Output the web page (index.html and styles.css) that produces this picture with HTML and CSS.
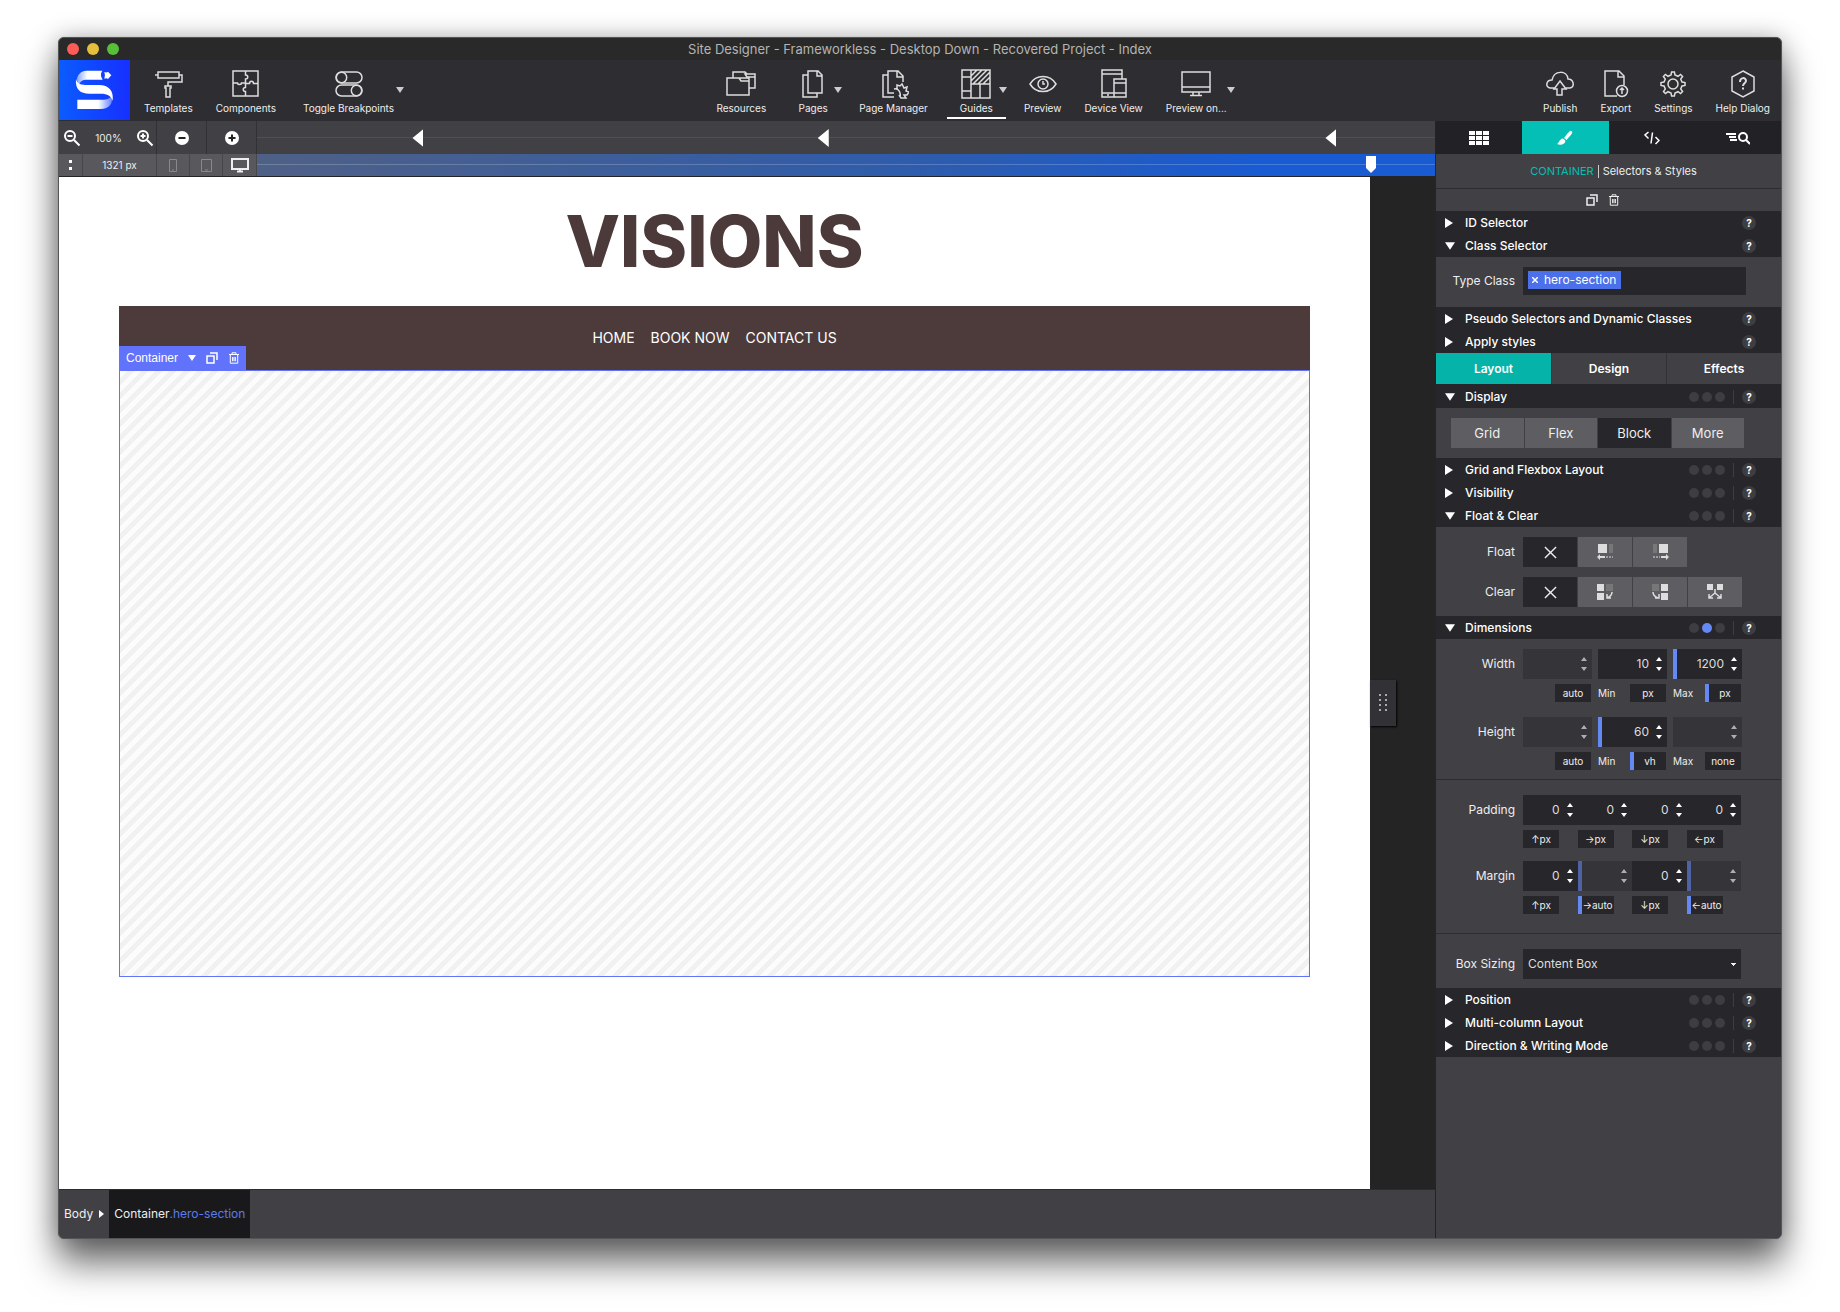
FILE: index.html
```html
<!DOCTYPE html>
<html lang="en">
<head>
<meta charset="utf-8">
<title>Site Designer</title>
<link rel="stylesheet" href="styles.css">
</head>
<body>
<svg class="sprite" aria-hidden="true">
  <symbol id="copy" viewBox="0 0 12 12"><path d="M1 4h7v7H1zM4 1h7v7" fill="none" stroke="currentColor" stroke-width="1.5"/></symbol>
  <symbol id="trash" viewBox="0 0 12 12"><path d="M1 2.5h10M4 2V.8h4V2M2.3 3v8.2h7.4V3M4.6 5v4.2M6 5v4.2M7.4 5v4.2" fill="none" stroke="currentColor"/></symbol>
  <symbol id="spin" viewBox="0 0 6 16"><path d="M0 5l3-4 3 4zM0 11l3 4 3-4z" fill="currentColor"/></symbol>
  <symbol id="cross" viewBox="0 0 14 14"><path d="M1 1l12 12M13 1L1 13" fill="none" stroke="currentColor" stroke-width="1.5"/></symbol>
  <symbol id="down" viewBox="0 0 8 6"><path d="M0 0h8L4 6z" fill="currentColor"/></symbol>
  <symbol id="right" viewBox="0 0 8 10"><path d="M0 0l8 5-8 5z" fill="currentColor"/></symbol>
</svg>

<div class="window">
  <header class="titlebar">
    <div class="lights"><i class="light red"></i><i class="light yellow"></i><i class="light green"></i></div>
    <h1>Site Designer - Frameworkless - Desktop Down - Recovered Project - Index</h1>
  </header>

  <nav class="toolbar">
    <div class="group">
      <div class="logo">
        <svg viewBox="0 0 213 180" width="71" height="60">
          <defs>
            <linearGradient id="g1" x1="0" x2="1"><stop offset="0" stop-color="#fff" stop-opacity=".5"/><stop offset=".4" stop-color="#fff"/></linearGradient>
            <linearGradient id="g2" x1="0" x2="1"><stop offset=".6" stop-color="#fff"/><stop offset="1" stop-color="#fff" stop-opacity=".35"/></linearGradient>
          </defs>
          <path fill="url(#g1)" d="M54 59C55 43 66 33 82 32h48q-9 13 1 27H84C72 59 62 62 60 78Q55 70 54 59z"/>
          <path fill="#fff" d="M51 56C54 72 66 75 88 75h32c30 0 45 18 41 48-4-15-16-22-36-22H92C62 101 48 86 51 56z"/>
          <path fill="url(#g2)" d="M55 119h80c14 0 20-6 22-13 8 24-6 41-32 41H55z"/>
          <path fill="#fff" d="M136 36q7 3 11-1l10 11-10 11q-4-4-11-1 4-10 0-20z"/>
        </svg>
      </div>
      <button class="tool"><svg class="icon" viewBox="0 0 30 30"><path d="M5 3h21v6H5zM5 6H2M26 6h3v7H15v4M12 17h6v2h-1v9h-4v-9h-1z"/></svg>Templates</button>
      <button class="tool"><svg class="icon" viewBox="0 0 30 30"><path d="M2 2h25v25H2zM14.500 2v4c3 0 3 4 0 4v4h-4c0 2-4 2-4 0H2M14.500 14.500h4c0-3 4-3 4 0H27M14.500 14.500v4c-3 0-3 4 0 4V27"/></svg>Components</button>
      <div class="menu wide"><button class="tool"><svg class="icon" viewBox="0 0 30 30"><rect x="2" y="3" width="26" height="11" rx="5.500"/><circle cx="7.500" cy="8.500" r="5.200"/><rect x="2" y="16" width="26" height="11" rx="5.500"/><circle cx="22.500" cy="21.500" r="5.200"/></svg>Toggle Breakpoints</button><button class="more" aria-label="More"><svg width="8" height="6"><use href="#down"/></svg></button></div>
    </div>

    <div class="group center">
      <button class="tool"><svg class="icon" viewBox="0 0 30 30"><path d="M1 9h12l2 3h8v14H1zM7 9V3h12l2 2h8v14h-6M13 9h10v3M19 5h10v3h-8z"/></svg>Resources</button>
      <div class="menu"><button class="tool"><svg class="icon" viewBox="0 0 30 30"><path d="M10 2h10l4 4v18H10zM19 2v5h5M10 6H5v22h14v-4"/></svg>Pages</button><button class="more" aria-label="More"><svg width="8" height="6"><use href="#down"/></svg></button></div>
      <button class="tool"><svg class="icon" viewBox="0 0 30 30"><path d="M15 24h-6V2h10l5 5v6M18 2v6h6M9 6H4v22h11M18 21v-5l3 1 2-2 2 4 3-1-1 4 3 1-2 3h-3l2 3h-5l-2-3M15 20c5-1 7 4 6 8"/></svg>Page Manager</button>
      <div class="menu active"><button class="tool"><svg class="icon" viewBox="0 0 30 30"><path d="M1 1h28v28H1zM10 1v28M1 8h9M1 22h9M10 15h19M19 15v14M10 7l6-6M10 12L21 1M12 15L26 1M17 15L29 3M22 15l7-7"/></svg>Guides</button><button class="more" aria-label="More"><svg width="8" height="6"><use href="#down"/></svg></button></div>
      <button class="tool"><svg class="icon" viewBox="0 0 30 30"><path d="M2 15C8 5 22 5 28 15 22 25 8 25 2 15z"/><circle cx="15" cy="15" r="5"/><path d="M15 12v3h2"/></svg>Preview</button>
      <button class="tool"><svg class="icon" viewBox="0 0 30 30"><path d="M15 24H3V1h20v9M3 5h20M15 28H3v-4M15 10h12v18H15zM15 14h12M15 24h12M8 26h2"/></svg>Device View</button>
      <div class="menu wide"><button class="tool"><svg class="icon" viewBox="0 0 30 30"><path d="M1 3h28v20H1zM1 18h28M12 23v3M18 23v3M9 26.500h12"/></svg>Preview on...</button><button class="more" aria-label="More"><svg width="8" height="6"><use href="#down"/></svg></button></div>
    </div>

    <div class="group end">
      <button class="tool"><svg class="icon" viewBox="0 0 30 30"><path d="M10 19H5c-5-1-4-8 2-8C9 1 22 1 23 10c6 0 7 8 2 9h-5M15 12l6 8h-4v6h-5v-6H9z"/></svg>Publish</button>
      <button class="tool"><svg class="icon" viewBox="0 0 30 30"><path d="M16 27H4V2h14l5 5v9M17 2v6h6"/><circle cx="21" cy="22" r="5.500"/><path d="M21 25v-6M19 21l2-2 2 2"/></svg>Export</button>
      <button class="tool"><svg class="icon" viewBox="0 0 30 30"><path d="M13 6l.6-3h2.800l.6 3 3 1.300L22.600 5.500l2 2L22.700 10 24 13l3 .6v2.800l-3 .6-1.300 3 1.900 2.500-2 2L20 22.700 17 24l-.6 3h-2.800L13 24l-3-1.300-2.500 1.900-2-2L7.300 20 6 17l-3-.6v-2.800L6 13l1.300-3-1.900-2.500 2-2L10 7.300z"/><circle cx="15" cy="15" r="5"/></svg>Settings</button>
      <button class="tool"><svg class="icon" viewBox="0 0 30 30"><path d="M15 2l11 6v14l-11 6-11-6V8z"/><path stroke-width="2" d="M12 13c0-5 6-5 6-1 0 2-3 2-3 5M15 18.500v2"/></svg>Help Dialog</button>
    </div>
  </nav>

  <div class="main">
    <section class="workspace">
      <div class="rulers">
        <div class="zoombar">
          <div class="zoom">
            <button aria-label="Zoom out"><svg width="18" height="18" viewBox="0 0 18 18" class="glass"><circle cx="7" cy="7" r="5"/><path d="M11 11l5.500 5.500M4.500 7h5"/></svg></button>
            <span>100%</span>
            <button aria-label="Zoom in"><svg width="18" height="18" viewBox="0 0 18 18" class="glass"><circle cx="7" cy="7" r="5"/><path d="M11 11l5.500 5.500M4.500 7h5M7 4.500v5"/></svg></button>
          </div>
          <button class="cell" aria-label="Remove breakpoint"><svg width="14" height="14" viewBox="0 0 14 14"><circle cx="7" cy="7" r="7" fill="#fff"/><path d="M3.500 7h7" stroke="#222" stroke-width="2"/></svg></button>
          <button class="cell" aria-label="Add breakpoint"><svg width="14" height="14" viewBox="0 0 14 14"><circle cx="7" cy="7" r="7" fill="#fff"/><path d="M3.500 7h7M7 3.500v7" stroke="#222" stroke-width="2"/></svg></button>
        </div>
        <div class="track">
          <i class="mark" style="left:13.200%"></i><i class="mark" style="left:47.600%"></i><i class="mark" style="left:90.700%"></i>
        </div>
        <div class="sizebar">
          <button class="dots" aria-label="Options"><svg width="4" height="10"><path d="M0 0h3v3H0zM0 7h3v3H0z" fill="#fff"/></svg></button>
          <span class="size">1321 px</span>
          <button class="device" aria-label="Phone"><svg width="8" height="13"><path d="M.5.500h7v12h-7zM3 11h2"/></svg></button>
          <button class="device" aria-label="Tablet"><svg width="11" height="13"><path d="M.5.500h10v12H.5zM4 11h3"/></svg></button>
          <button class="device on" aria-label="Desktop"><svg width="18" height="15"><path d="M1 1h16v10H1zM6 13.500h6M9 11v2"/></svg></button>
        </div>
        <div class="slider"><i class="thumb"></i></div>
      </div>

      <div class="stage">
        <div class="page">
          <h2>VISIONS</h2>
          <div class="sitenav"><a href="#">HOME</a><a href="#">BOOK NOW</a><a href="#">CONTACT US</a>
            <div class="tag">
              <span>Container</span><svg width="8" height="6"><use href="#down"/></svg>
              <button aria-label="Duplicate"><svg width="12" height="12"><use href="#copy"/></svg></button>
              <button aria-label="Delete"><svg width="12" height="12"><use href="#trash"/></svg></button>
            </div>
          </div>
          <div class="hero"></div>
        </div>
        <div class="gutter"><button class="grip" aria-label="Resize"><svg width="8" height="18"><path d="M0 1h2M6 1h2M0 6h2M6 6h2M0 11h2M6 11h2M0 16h2M6 16h2" stroke="#aaa" stroke-width="2"/></svg></button></div>
      </div>

      <footer class="crumbs">
        <a href="#" class="crumb">Body <svg width="5" height="8"><path d="M0 0l5 4-5 4z" fill="#fff"/></svg></a>
        <a href="#" class="crumb current">Container<span>.hero-section</span></a>
      </footer>
    </section>

    <aside class="panel">
      <div class="modes">
        <button aria-label="Components"><svg width="20" height="14"><path d="M0 2h6M7 2h6M14 2h6M0 7h6M7 7h6M14 7h6M0 12h6M7 12h6M14 12h6" stroke="#fff" stroke-width="4"/></svg></button>
        <button class="on" aria-label="Styles"><svg width="16" height="16"><path d="M14.500 1C16.500 2.500 15 4 9.500 10L7 8C11 3 13 0 14.500 1zM6 8.500l2.500 2.300C8 15 3 15.500 0 14 2.500 13 2 9 6 8.500z" fill="#fff"/></svg></button>
        <button aria-label="Code"><svg width="16" height="14"><path d="M4.500 1L1 4l3.500 3.500M8.500 1.500l-1.500 11M11.500 6L15 9.500 11.500 13" fill="none" stroke="#fff" stroke-width="1.500"/></svg></button>
        <button aria-label="Inspect"><svg width="24" height="14"><path d="M0 3h10M3 6h7M4 9h7" stroke="#fff" stroke-width="2"/><circle cx="17" cy="6" r="4" fill="none" stroke="#fff" stroke-width="2"/><path d="M20 9l4 4" stroke="#fff" stroke-width="2"/></svg></button>
      </div>
      <div class="heading"><b>CONTAINER</b><i></i>Selectors &amp; Styles</div>
      <div class="actions"><button aria-label="Duplicate"><svg width="12" height="12"><use href="#copy"/></svg></button><button aria-label="Delete"><svg width="12" height="12"><use href="#trash"/></svg></button></div>

      <div class="row"><button class="fold"><svg width="8" height="10"><use href="#right"/></svg>ID Selector</button><button class="help">?</button></div>
      <div class="row open"><button class="fold"><svg width="10" height="8"><use href="#down"/></svg>Class Selector</button><button class="help">?</button></div>
      <div class="body classes">
        <label for="cls">Type Class</label>
        <div class="tokens"><span class="token"><button aria-label="Remove"><svg width="6" height="6" viewBox="0 0 6 6"><path d="M0 0l6 6M6 0L0 6" stroke="#fff" stroke-width="1.500"/></svg></button>hero-section</span><input id="cls" type="text"></div>
      </div>
      <div class="row"><button class="fold"><svg width="8" height="10"><use href="#right"/></svg>Pseudo Selectors and Dynamic Classes</button><button class="help">?</button></div>
      <div class="row"><button class="fold"><svg width="8" height="10"><use href="#right"/></svg>Apply styles</button><button class="help">?</button></div>

      <div class="tabs"><button class="on">Layout</button><button>Design</button><button>Effects</button></div>

      <div class="row"><button class="fold"><svg width="10" height="8"><use href="#down"/></svg>Display</button><span class="states"><i></i><i></i><i></i></span><button class="help">?</button></div>
      <div class="body"><div class="choices"><button>Grid</button><button>Flex</button><button class="on">Block</button><button>More</button></div></div>

      <div class="row"><button class="fold"><svg width="8" height="10"><use href="#right"/></svg>Grid and Flexbox Layout</button><span class="states"><i></i><i></i><i></i></span><button class="help">?</button></div>
      <div class="row"><button class="fold"><svg width="8" height="10"><use href="#right"/></svg>Visibility</button><span class="states"><i></i><i></i><i></i></span><button class="help">?</button></div>
      <div class="row"><button class="fold"><svg width="10" height="8"><use href="#down"/></svg>Float &amp; Clear</button><span class="states"><i></i><i></i><i></i></span><button class="help">?</button></div>
      <div class="body stack">
        <div class="field"><span class="name">Float</span><div class="quad icons">
          <button class="on" aria-label="None"><svg width="13" height="13"><use href="#cross"/></svg></button>
          <button aria-label="Left"><svg width="17" height="16"><path fill="#ddd" d="M1 0h9v9H1zM0 13l3-3v2h5v2H3v2z"/><path fill="#777" d="M12 0h4v9h-4z"/><path d="M9 13h7" stroke="#ddd" stroke-dasharray="2 1"/></svg></button>
          <button aria-label="Right"><svg width="17" height="16"><path fill="#ddd" d="M7 0h9v9H7zM17 13l-3-3v2H9v2h5v2z"/><path fill="#777" d="M1 0h4v9H1z"/><path d="M1 13h7" stroke="#ddd" stroke-dasharray="2 1"/></svg></button>
        </div></div>
        <div class="field"><span class="name">Clear</span><div class="quad icons">
          <button class="on" aria-label="None"><svg width="13" height="13"><use href="#cross"/></svg></button>
          <button aria-label="Left"><svg width="17" height="17"><path fill="#ddd" d="M0 0h7v7H0zM0 9h7v7H0z"/><path fill="#777" d="M9 0h7v7H9z"/><path d="M15 8q0 4-5 6M10 10v4h4" fill="none" stroke="#ddd" stroke-width="1.500"/></svg></button>
          <button aria-label="Right"><svg width="17" height="17"><path fill="#ddd" d="M9 0h7v7H9zM9 9h7v7H9z"/><path fill="#777" d="M0 0h7v7H0z"/><path d="M1 8q0 4 5 6M7 10v4H3" fill="none" stroke="#ddd" stroke-width="1.500"/></svg></button>
          <button aria-label="Both"><svg width="17" height="17"><path fill="#ddd" d="M0 0h6v6H0zM10 0h6v6h-6z"/><path d="M8 5v4l-6 5M8 9l6 5M2 10v4h4M14 10v4h-4" fill="none" stroke="#ddd" stroke-width="1.500"/></svg></button>
        </div></div>
      </div>

      <div class="row"><button class="fold"><svg width="10" height="8"><use href="#down"/></svg>Dimensions</button><span class="states"><i></i><i class="set"></i><i></i></span><button class="help">?</button></div>
      <div class="body dims">
        <div class="field"><label class="name" for="w">Width</label><div class="triple">
          <div class="num off"><input id="w" type="text"><button aria-label="Step"><svg width="6" height="16"><use href="#spin"/></svg></button></div>
          <div class="num"><input aria-label="Min width" type="text" value="10"><button aria-label="Step"><svg width="6" height="16"><use href="#spin"/></svg></button></div>
          <div class="num set"><input aria-label="Max width" type="text" value="1200"><button aria-label="Step"><svg width="6" height="16"><use href="#spin"/></svg></button></div>
          <div class="unit"><button>auto</button></div>
          <div class="unit"><span>Min</span><button>px</button></div>
          <div class="unit"><span>Max</span><button class="set">px</button></div>
        </div></div>
        <div class="field"><label class="name" for="h">Height</label><div class="triple">
          <div class="num off"><input id="h" type="text"><button aria-label="Step"><svg width="6" height="16"><use href="#spin"/></svg></button></div>
          <div class="num set"><input aria-label="Min height" type="text" value="60"><button aria-label="Step"><svg width="6" height="16"><use href="#spin"/></svg></button></div>
          <div class="num off"><input aria-label="Max height" type="text"><button aria-label="Step"><svg width="6" height="16"><use href="#spin"/></svg></button></div>
          <div class="unit"><button>auto</button></div>
          <div class="unit"><span>Min</span><button class="set">vh</button></div>
          <div class="unit"><span>Max</span><button>none</button></div>
        </div></div>
      </div>
      <div class="body spacing">
        <div class="field"><label class="name" for="p">Padding</label><div class="quad">
          <div class="num"><input id="p" type="text" value="0"><button aria-label="Step"><svg width="6" height="16"><use href="#spin"/></svg></button></div>
          <div class="num"><input aria-label="Padding right" type="text" value="0"><button aria-label="Step"><svg width="6" height="16"><use href="#spin"/></svg></button></div>
          <div class="num"><input aria-label="Padding bottom" type="text" value="0"><button aria-label="Step"><svg width="6" height="16"><use href="#spin"/></svg></button></div>
          <div class="num"><input aria-label="Padding left" type="text" value="0"><button aria-label="Step"><svg width="6" height="16"><use href="#spin"/></svg></button></div>
          <div class="unit"><button>↑px</button></div><div class="unit"><button>→px</button></div><div class="unit"><button>↓px</button></div><div class="unit"><button>←px</button></div>
        </div></div>
        <div class="field"><label class="name" for="m">Margin</label><div class="quad">
          <div class="num"><input id="m" type="text" value="0"><button aria-label="Step"><svg width="6" height="16"><use href="#spin"/></svg></button></div>
          <div class="num off set"><input aria-label="Margin right" type="text"><button aria-label="Step"><svg width="6" height="16"><use href="#spin"/></svg></button></div>
          <div class="num"><input aria-label="Margin bottom" type="text" value="0"><button aria-label="Step"><svg width="6" height="16"><use href="#spin"/></svg></button></div>
          <div class="num off set"><input aria-label="Margin left" type="text"><button aria-label="Step"><svg width="6" height="16"><use href="#spin"/></svg></button></div>
          <div class="unit"><button>↑px</button></div><div class="unit"><button class="set">→auto</button></div><div class="unit"><button>↓px</button></div><div class="unit"><button class="set">←auto</button></div>
        </div></div>
      </div>
      <div class="body sizing">
        <div class="field"><label class="name" for="bs">Box Sizing</label><select id="bs"><option>Content Box</option><option>Border Box</option></select></div>
      </div>

      <div class="row"><button class="fold"><svg width="8" height="10"><use href="#right"/></svg>Position</button><span class="states"><i></i><i></i><i></i></span><button class="help">?</button></div>
      <div class="row"><button class="fold"><svg width="8" height="10"><use href="#right"/></svg>Multi-column Layout</button><span class="states"><i></i><i></i><i></i></span><button class="help">?</button></div>
      <div class="row"><button class="fold"><svg width="8" height="10"><use href="#right"/></svg>Direction &amp; Writing Mode</button><span class="states"><i></i><i></i><i></i></span><button class="help">?</button></div>
    </aside>
  </div>
</div>
</body>
</html>
```
FILE: styles.css
```css
* { box-sizing: border-box; }
body {
  margin: 0;
  padding: 37px 58px 73px;
  min-height: 100vh;
  display: flex;
  overflow: hidden;
  background: #fff;
  font: 12px/16px Inter, "Liberation Sans", sans-serif;
  color: #eee;
}
.sprite { position: absolute; width: 0; height: 0; }
svg { display: block; flex: none; }
button { border: 0; padding: 0; background: none; color: inherit; font: inherit; display: flex; align-items: center; justify-content: center; }
a { color: inherit; text-decoration: none; }
input { border: 0; padding: 0; background: none; color: inherit; font: inherit; min-width: 0; outline: 0; }

.window {
  flex: 1;
  display: flex;
  flex-direction: column;
  border: 1px solid #555558;
  border-radius: 6px;
  overflow: hidden;
  background: #414044;
  box-shadow: 0 0 1px #888, 0 24px 36px rgba(0, 0, 0, .58), 0 0 24px rgba(0, 0, 0, .25);
}
.titlebar { height: 22px; display: grid; grid-template-columns: 1fr auto 1fr; align-items: center; background: #292929; }
.lights { display: flex; gap: 8px; padding-left: 8px; }
.light { width: 12px; height: 12px; border-radius: 50%; }
.red { background: #fc5b57; }
.yellow { background: #e5bf3c; }
.green { background: #57c038; }
.titlebar h1 { margin: 0; font-size: 13px; font-weight: 400; color: #b4b4b4; }

.toolbar { height: 61px; display: flex; justify-content: space-between; background: #2e2d31; }
.group { display: flex; gap: 23px; }
.group.end { padding-right: 11px; }
.group.center { padding-left: 4px; }
.logo { width: 71px; height: 60px; margin-right: -9px; background: linear-gradient(90deg, #0a5cff, #1730ff); }
.tool { flex-direction: column; justify-content: flex-start; gap: 1px; padding-top: 9px; font-size: 10px; line-height: 16px; white-space: nowrap; }
.icon { width: 30px; height: 30px; fill: none; stroke: #ddd; stroke-width: 1.5; }
.menu { position: relative; display: flex; gap: 6px; margin: 0 -6px 0 9px; }
.menu.wide { gap: 2px; margin: 0 0 0 4px; }
.center .wide { gap: 0; margin: 0; }
.more { width: 8px; padding-bottom: 2px; color: #ccc; }
.menu.active::after { content: ""; position: absolute; left: -13px; right: 1px; bottom: 2px; height: 2px; background: #fff; }

.main { flex: 1; display: grid; grid-template-columns: 1fr 345px; }
.workspace { display: flex; flex-direction: column; min-width: 0; border-right: 1px solid #242327; }
.rulers { display: grid; grid-template-columns: 198px 1fr; grid-template-rows: 33px 22px; border-bottom: 1px solid #242327; }
.zoombar { display: grid; grid-template-columns: 98px 50px 50px; font-size: 10px; }
.zoombar > * { border-right: 1px solid #323135; }
.zoom { display: flex; align-items: center; justify-content: space-between; padding: 0 2px 0 4px; }
.glass { fill: none; stroke: #fff; stroke-width: 2; }
.track { position: relative; background: linear-gradient(#504f53, #504f53) 0 16px / 100% 1px no-repeat; }
.mark { position: absolute; top: 8px; width: 11px; height: 18px; background: #fff; clip-path: polygon(0 50%, 100% 0, 100% 100%); }
.sizebar { display: grid; grid-template-columns: 24px 74px 33px 33px 34px; background: #59585c; font-size: 10px; }
.sizebar > * { border-right: 1px solid #47464a; }
.size { text-align: center; line-height: 22px; }
.device svg { fill: none; stroke: #88878b; }
.device.on svg { stroke: #eee; stroke-width: 2; }
.slider { position: relative; background: linear-gradient(rgba(255, 255, 255, .2), rgba(255, 255, 255, .2)) 0 10px / 100% 1px no-repeat, linear-gradient(90deg, #4e6086, #2f5cab 55%, #195bd2 85%); }
.thumb { position: absolute; right: 59px; top: 2px; width: 10px; height: 17px; background: #fff; clip-path: polygon(0 0, 100% 0, 100% 70%, 50% 100%, 0 70%); }

.stage { flex: 1; display: grid; grid-template-columns: 1fr 65px; background: #242424; }
.page { background: #fff; padding: 22px 60px 0; }
.page h2 { margin: 0 0 23px; text-align: center; font-size: 71px; line-height: 84px; font-weight: 800; color: #4c3939; }
.sitenav { position: relative; display: flex; justify-content: center; gap: 16px; height: 64px; padding-top: 22px; background: #4d3b3b; color: #fff; font-size: 14px; line-height: 20px; }
.tag { position: absolute; left: 0; bottom: 0; height: 24px; display: flex; align-items: center; gap: 10px; padding: 0 6px 0 7px; background: #6172fb; color: #fff; font: 12px/16px "Liberation Sans", sans-serif; }
.hero { height: 607px; border: 1px solid #6172fb; background: repeating-linear-gradient(135deg, #fcfcfc 0 5px, #f1f1f1 5px 10px); }
.gutter { display: flex; align-items: center; }
.grip { width: 26px; height: 46px; margin-top: 40px; background: #323136; box-shadow: 1px 1px 2px #000; }

.crumbs { height: 49px; display: flex; border-top: 1px solid #2c2b2f; font-size: 12px; }
.crumb { display: flex; align-items: center; gap: 6px; padding: 0 5px; }
.crumb.current { gap: 0; background: #19191b; }
.crumb.current span { color: #5d7bea; }

.panel { font-size: 12px; background: #414044; }
.modes { display: grid; grid-template-columns: repeat(4, 1fr); height: 33px; background: #222126; }
.modes .on { background: #04bfb5; }
.heading { display: flex; align-items: center; justify-content: center; height: 35px; border-bottom: 1px solid #2d2c30; padding-left: 10px; font-size: 11px; }
.heading b { font-weight: 400; color: #04bfb5; }
.heading i { width: 1px; height: 13px; margin: 0 4px; background: #ccc; }
.actions { display: flex; align-items: center; justify-content: center; gap: 10px; height: 22px; padding-right: 12px; }
.row { display: flex; align-items: center; height: 23px; padding: 0 25px 0 9px; background: #27262a; }
.fold { flex: 1; justify-content: flex-start; color: #fff; font-weight: 500; }
.fold svg { margin-right: 12px; }
.fold svg[width="10"] { margin-right: 10px; }
.help { width: 14px; height: 14px; border-radius: 50%; background: #3e3d41; color: #fff; font-size: 10px; font-weight: 700; line-height: 14px; }
.states { display: flex; gap: 3px; padding-right: 8px; margin-right: 8px; border-right: 1px solid #3e3d41; height: 14px; align-items: center; }
.states i { width: 10px; height: 10px; border-radius: 50%; background: #3e3d41; }
.states .set { background: #6489f5; }
.body { padding: 10px; }
.classes { display: grid; grid-template-columns: 70px 223px; gap: 8px; padding: 10px 9px 12px; height: 50px; align-items: center; text-align: right; }
.tokens { display: flex; height: 28px; padding: 4px 5px; background: #27262a; }
.tokens input { flex: 1; }
.token { display: flex; align-items: center; gap: 6px; padding: 0 5px 0 4px; height: 18px; background: #4b70ea; color: #fff; }
.tabs { display: grid; grid-template-columns: repeat(3, 1fr); height: 32px; border-bottom: 1px solid #27262a; font-weight: 600; color: #fff; }
.tabs button + button { border-left: 1px solid #323135; }
.tabs .on { background: #06b3a8; }
.choices { display: grid; grid-template-columns: repeat(4, 1fr); gap: 1px; width: 293px; height: 30px; margin-left: 5px; font-size: 13px; }
.choices button, .icons button { background: #5e5d61; }
.choices .on, .icons .on { background: #27262a; }
.stack { display: grid; gap: 10px; padding-bottom: 9px; }
.field { display: grid; grid-template-columns: 69px 220px; gap: 8px; }
.name { text-align: right; line-height: 30px; }
.quad { display: grid; grid-template-columns: repeat(4, 54px); column-gap: 1px; row-gap: 5px; align-content: start; }
.icons button { height: 30px; }
.triple { display: grid; grid-template-columns: repeat(3, 69px); column-gap: 6px; row-gap: 5px; }
.num { display: flex; align-items: center; justify-content: flex-end; height: 30px; padding-right: 5px; background: #27262a; color: #fff; font-size: 12px; }
.num input { flex: 1; width: 0; text-align: right; color: #ddd; }
.num button { margin-left: 7px; }
.num.off { background: #353438; }
.num.off button { opacity: .6; }
.set.num { border-left: 4px solid #6489f5; }
.off.set.num { border-left: 4px solid #4f62a4; }
.quad:not(.icons) { column-gap: 0; grid-template-columns: repeat(4, 1fr); width: 218px; }
.unit { display: flex; justify-content: space-between; align-items: center; font-size: 10px; padding-right: 1px; }
.unit button { width: 36px; height: 18px; background: #27262a; white-space: nowrap; }
.unit button:only-child { margin-left: auto; }
.quad .unit button:only-child { margin-left: 0; }
.unit .set { border-left: 4px solid #6489f5; }
.dims { display: grid; gap: 15px; padding-bottom: 9px; }
.spacing { display: grid; gap: 13px; padding: 15px 10px 19px; border-top: 1px solid #2d2c30; border-bottom: 1px solid #2d2c30; }
.sizing { padding: 15px 10px 9px; }
.sizing select {
  width: 218px; height: 30px; border: 0; padding: 0 5px; appearance: none; border-radius: 0;
  font: inherit; color: #ddd;
  background: conic-gradient(from -45deg at 50% 100%, #eee 90deg, transparent 0) right 5px center / 6px 3px no-repeat #27262a;
}
```
